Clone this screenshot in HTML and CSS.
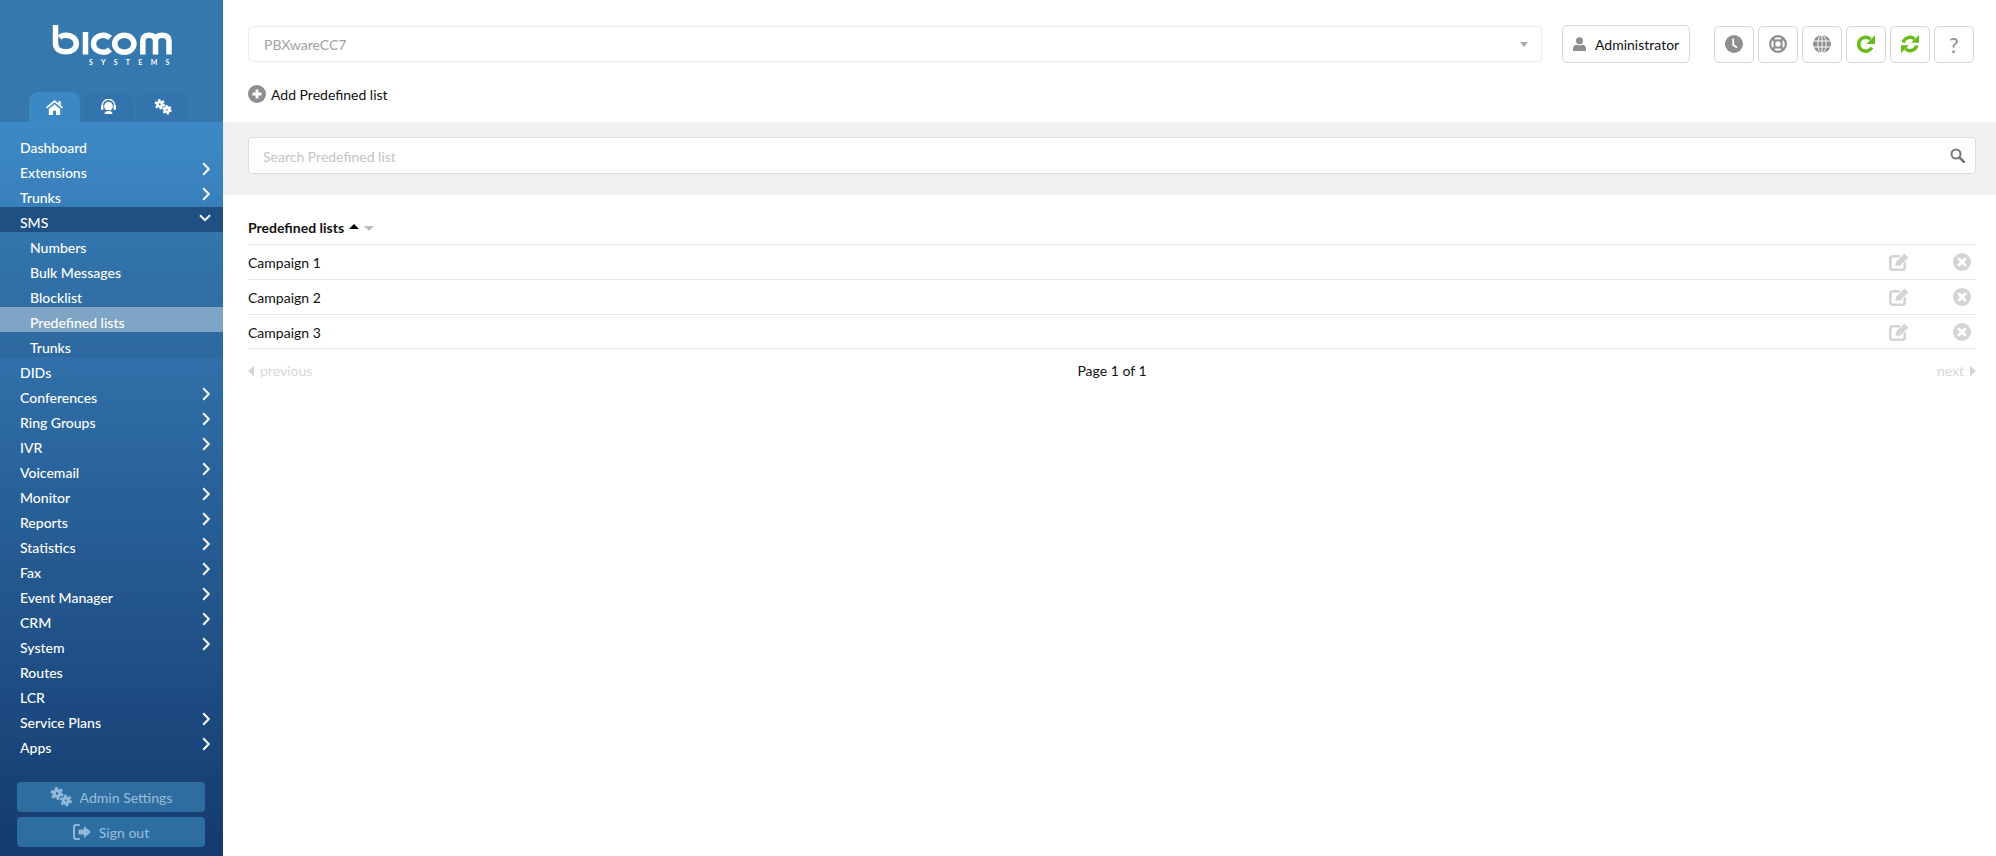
FILE: index.html
```html
<!DOCTYPE html>
<html lang="en">
<head>
<meta charset="utf-8">
<title>Predefined lists</title>
<link rel="stylesheet" href="styles.css">
</head>
<body>
<svg class="defs" width="0" height="0" aria-hidden="true">
  <defs>
    <symbol id="chev-r" viewBox="0 0 8 14"><path d="M1.2 1.2 6.8 7 1.2 12.8" fill="none" stroke="currentColor" stroke-width="2"/></symbol>
    <symbol id="chev-d" viewBox="0 0 12 8"><path d="M1 1.2 6 6.2 11 1.2" fill="none" stroke="currentColor" stroke-width="2"/></symbol>
    <symbol id="cogs" viewBox="0 0 22 20">
      <g fill="none" stroke="currentColor">
        <circle cx="7" cy="6.5" r="3" stroke-width="3.4"/>
        <circle cx="7" cy="6.5" r="5.3" stroke-width="2.4" stroke-dasharray="2.8 2.75"/>
        <circle cx="16" cy="13.5" r="2.7" stroke-width="3.2"/>
        <circle cx="16" cy="13.5" r="4.8" stroke-width="2.4" stroke-dasharray="2.6 2.43"/>
      </g>
    </symbol>
    <symbol id="edit" viewBox="0 0 20 18">
      <path d="M3 3.300H11M15.700 9V14.500A2.200 2.200 0 0 1 13.500 16.700H3.500A2.200 2.200 0 0 1 1.300 14.500V5.500A2.200 2.200 0 0 1 3.500 3.300" fill="none" stroke="currentColor" stroke-width="2.600"/>
      <path d="M5.800 13 6.600 8.700 15.300 0 20 4.400 11 13.200z" fill="currentColor" stroke="#fff" stroke-width="1"/>
    </symbol>
    <symbol id="close" viewBox="0 0 18 18">
      <circle cx="9" cy="9" r="9" fill="currentColor"/>
      <path d="M6 6 12 12M12 6 6 12" stroke="#fff" stroke-width="3" stroke-linecap="round"/>
    </symbol>
  </defs>
</svg>

<div class="app">
  <aside class="sidebar">
    <div class="brand">
      <svg class="logo" viewBox="0 0 120 32" width="120" height="32" role="img" aria-label="Bicom">
        <g fill="none" stroke="#fff" stroke-width="5.500">
          <path d="M3.500 1C3.500 3 3.500 5 3.500 19.500C3.500 25 8 27.800 14 27.800C20 27.800 24.300 24.500 24.300 19.800C24.300 15 20 11.200 14 11.200C11 11.200 9 12 7.500 13.500"/>
          <path d="M33.500 8V30.500"/>
          <path d="M58 14C56 12 54 11.200 51.500 11.200C46 11.200 41.500 14.800 41.500 19.800C41.500 24.800 46 28.200 51.500 28.200C54 28.200 56 27.500 58 25.500"/>
          <ellipse cx="72.300" cy="19.700" rx="9.600" ry="8.500"/>
          <path d="M90.800 30.500V17C90.800 13.500 92.500 11.200 97 11.200C101.500 11.200 103.500 13.500 103.500 17V30.500M103.500 17C103.500 13.500 105.500 11.200 110 11.200C115 11.200 117 13.500 117 17V30.500"/>
        </g>
      </svg>
      <div class="logo-sub">SYSTEMS</div>
    </div>
    <div class="tabs">
      <div class="tab tab-active">
        <svg width="17" height="15" viewBox="0 0 17 15"><path d="M8.500 0 12.500 3.400V1h2.200v4.300L17 7.300 16 8.500 8.500 2.200 1 8.500 0 7.300zM2.800 9 8.500 4.200 14.200 9v6H10v-4.200H7V15H2.800z" fill="#fff"/></svg>
      </div>
      <div class="tab">
        <svg width="15" height="16" viewBox="0 0 15 16"><path d="M1.300 8V6.500a6.200 6.200 0 0 1 12.400 0V8" fill="none" stroke="#fff" stroke-width="1.300"/><ellipse cx="7.500" cy="7.200" rx="4.300" ry="4.500" fill="#fff"/><rect x="0" y="6" width="2.400" height="5" rx="1" fill="#fff"/><rect x="12.600" y="6" width="2.400" height="5" rx="1" fill="#fff"/><path d="M3.500 15c0-2 1.500-3 4-3s4 1 4 3z" fill="#fff"/><path d="M4.500 11.500h4" stroke="#3474ad" stroke-width="1"/></svg>
      </div>
      <div class="tab">
        <svg class="cog-icon" width="18" height="16"><use href="#cogs"/></svg>
      </div>
    </div>
    <div class="nav-wrap">
      <nav class="nav">
        <a class="item">Dashboard</a>
        <a class="item">Extensions<svg class="chev"><use href="#chev-r"/></svg></a>
        <a class="item">Trunks<svg class="chev"><use href="#chev-r"/></svg></a>
        <a class="item item-open">SMS<svg class="chev-down"><use href="#chev-d"/></svg></a>
        <div class="sub">
          <a class="item sub-item">Numbers</a>
          <a class="item sub-item">Bulk Messages</a>
          <a class="item sub-item">Blocklist</a>
          <a class="item sub-item sub-active">Predefined lists</a>
          <a class="item sub-item">Trunks</a>
        </div>
        <a class="item">DIDs</a>
        <a class="item">Conferences<svg class="chev"><use href="#chev-r"/></svg></a>
        <a class="item">Ring Groups<svg class="chev"><use href="#chev-r"/></svg></a>
        <a class="item">IVR<svg class="chev"><use href="#chev-r"/></svg></a>
        <a class="item">Voicemail<svg class="chev"><use href="#chev-r"/></svg></a>
        <a class="item">Monitor<svg class="chev"><use href="#chev-r"/></svg></a>
        <a class="item">Reports<svg class="chev"><use href="#chev-r"/></svg></a>
        <a class="item">Statistics<svg class="chev"><use href="#chev-r"/></svg></a>
        <a class="item">Fax<svg class="chev"><use href="#chev-r"/></svg></a>
        <a class="item">Event Manager<svg class="chev"><use href="#chev-r"/></svg></a>
        <a class="item">CRM<svg class="chev"><use href="#chev-r"/></svg></a>
        <a class="item">System<svg class="chev"><use href="#chev-r"/></svg></a>
        <a class="item">Routes</a>
        <a class="item">LCR</a>
        <a class="item">Service Plans<svg class="chev"><use href="#chev-r"/></svg></a>
        <a class="item">Apps<svg class="chev"><use href="#chev-r"/></svg></a>
      </nav>
      <div class="side-buttons">
        <a class="side-btn"><svg class="side-cogs"><use href="#cogs"/></svg>Admin Settings</a>
        <a class="side-btn"><svg width="18" height="16" viewBox="0 0 18 16"><path d="M6 1H3a2 2 0 0 0-2 2v10a2 2 0 0 0 2 2h3" fill="none" stroke="currentColor" stroke-width="2" stroke-linecap="round"/><path d="M5.500 5.500h5.500V2L18 8 11 14v-3.500H5.500z" fill="currentColor"/></svg>Sign out</a>
      </div>
    </div>
  </aside>

  <main class="main">
    <div class="top">
      <div class="toolbar">
        <div class="select"><span>PBXwareCC7</span><i class="select-caret"></i></div>
        <button class="user-btn" type="button">
          <svg width="13" height="14" viewBox="0 0 13 14"><circle cx="6.500" cy="3.700" r="3.500" fill="#8e8e8e"/><path d="M0 14V11.500C0 9 2 8 4 7.800 5.500 8.500 7.500 8.500 9 7.800 11 8 13 9 13 11.500V14z" fill="#8e8e8e"/></svg>
          Administrator
        </button>
        <div class="tools">
          <button class="tool" type="button"><svg width="18" height="18" viewBox="0 0 18 18"><circle cx="9" cy="9" r="9" fill="#8e8e8e"/><path d="M8.200 3.500V10L12 12.500" fill="none" stroke="#fff" stroke-width="1.700"/></svg></button>
          <button class="tool" type="button"><svg width="18" height="18" viewBox="0 0 18 18"><g fill="none" stroke="#8e8e8e"><circle cx="9" cy="9" r="7.900" stroke-width="2.200"/><circle cx="9" cy="9" r="3.700" stroke-width="2"/><path d="M3.300 3.300 6 6M14.700 3.300 12 6M3.300 14.700 6 12M14.700 14.700 12 12" stroke-width="2.800"/></g></svg></button>
          <button class="tool" type="button"><svg width="18" height="18" viewBox="0 0 18 18"><circle cx="9" cy="9" r="9" fill="#8e8e8e"/><g fill="none" stroke="#fff" stroke-width="1"><ellipse cx="9" cy="9" rx="4.200" ry="9"/><path d="M9 0V18M0 6H18M0 12H18"/></g></svg></button>
          <button class="tool" type="button"><svg width="18" height="20" viewBox="0 0 18 20"><path d="M14.800 13.500A7 7 0 1 1 13.500 5.200" fill="none" stroke="#68bd1b" stroke-width="3.600"/><path d="M18 1V10H9.500z" fill="#68bd1b"/></svg></button>
          <button class="tool" type="button"><svg width="18" height="20" viewBox="0 0 18 20"><g fill="none" stroke="#68bd1b" stroke-width="3.400"><path d="M2.200 8.500A7 7 0 0 1 13.500 5"/><path d="M15.800 11.500A7 7 0 0 1 4.500 15"/></g><path d="M18 1V8.800H10zM0 19V11.200H8z" fill="#68bd1b"/></svg></button>
          <button class="tool tool-help" type="button">?</button>
        </div>
      </div>
      <a class="add-link"><svg width="18" height="18" viewBox="0 0 18 18"><circle cx="9" cy="9" r="9" fill="#8e8e8e"/><path d="M9 4.500V13.500M4.500 9H13.500" stroke="#fff" stroke-width="2.800"/></svg>Add Predefined list</a>
    </div>
    <div class="filter">
      <div class="search">
        <span class="search-text">Search Predefined list</span>
        <svg width="15" height="15" viewBox="0 0 15 15"><circle cx="6" cy="6" r="4.500" fill="none" stroke="#777" stroke-width="2"/><path d="M9.500 9.500 14 14" stroke="#777" stroke-width="2.500" stroke-linecap="round"/></svg>
      </div>
    </div>
    <section class="list">
      <div class="list-head">Predefined lists<i class="sort-up"></i><i class="sort-down"></i></div>
      <div class="row"><span>Campaign 1</span><div class="row-actions"><svg class="ic-edit"><use href="#edit"/></svg><svg class="ic-close"><use href="#close"/></svg></div></div>
      <div class="row"><span>Campaign 2</span><div class="row-actions"><svg class="ic-edit"><use href="#edit"/></svg><svg class="ic-close"><use href="#close"/></svg></div></div>
      <div class="row row-last"><span>Campaign 3</span><div class="row-actions"><svg class="ic-edit"><use href="#edit"/></svg><svg class="ic-close"><use href="#close"/></svg></div></div>
      <div class="pager">
        <span class="pager-side"><i class="tri-left"></i>previous</span>
        <span class="pager-mid">Page 1 of 1</span>
        <span class="pager-side pager-next">next<i class="tri-right"></i></span>
      </div>
    </section>
  </main>
</div>
</body>
</html>
```

FILE: styles.css
```css
* { box-sizing: border-box; }
html, body { margin: 0; height: 100%; }
body { font-family: Lato, "Open Sans", sans-serif; font-size: 14px; color: #111; background: #fff; overflow: hidden; }
.defs { position: absolute; }
.app { display: flex; height: 856px; }

.sidebar { width: 223px; flex: none; display: flex; flex-direction: column; background: #3578ae; }
.brand { height: 92px; padding: 24px 0 0 52px; }
.logo { display: block; }
.logo-sub { margin-top: 2px; padding-left: 37px; font-size: 7px; font-weight: 700; line-height: 9px; letter-spacing: 8.300px; color: #fff; white-space: nowrap; }
.tabs { display: flex; gap: 3px; height: 30px; padding-left: 29px; }
.tab { width: 51px; height: 30px; border-radius: 9px 9px 0 0; background: #3474ad; display: flex; align-items: center; justify-content: center; }
.tab-active { background: #3c88c4; }
.tab svg { display: block; }
.cog-icon { color: #fff; }

.nav-wrap { flex: 1; display: flex; flex-direction: column; justify-content: space-between; padding-top: 10px; background: linear-gradient(#3d89c5, #143a6e); }
.item { position: relative; display: block; height: 25px; padding: 7px 0 0 20px; line-height: 18px; font-weight: 500; color: #fff; }
.chev { position: absolute; right: 13px; top: 5px; width: 8px; height: 14px; color: #fff; }
.chev-down { position: absolute; right: 12px; top: 7px; width: 12px; height: 8px; color: #fff; }
.item-open { background: #1f4f83; }
.sub { background: rgba(0, 0, 0, .06); }
.sub-item { padding-left: 30px; }
.sub-active { background: rgba(255, 255, 255, .38); }

.side-buttons { display: flex; flex-direction: column; gap: 5px; padding: 0 18px 9px 17px; }
.side-btn { height: 30px; border-radius: 4px; background: #2e6d9f; color: #93b9d9; font-weight: 500; display: flex; align-items: center; justify-content: center; gap: 8px; }
.side-cogs { width: 22px; height: 20px; }

.main { flex: 1; min-width: 0; }
.top { height: 122px; padding: 25px 20px 0 25px; }
.toolbar { display: flex; align-items: center; height: 38px; margin-right: 2px; }
.select { flex: 1; height: 36px; display: flex; align-items: center; justify-content: space-between; padding: 1px 13px 0 15px; border: 1px solid #ececec; border-radius: 4px; color: #a2a2a2; }
.select-caret { width: 0; height: 0; border: 4px solid transparent; border-top: 5px solid #aaa; border-bottom: 0; }
.user-btn { width: 128px; height: 38px; margin-left: 20px; padding: 0 0 0 10px; display: flex; align-items: center; gap: 9px; border: 1px solid #d6d6d6; border-radius: 5px; background: #fff; font: inherit; color: #111; }
.tools { display: flex; gap: 4px; margin-left: 24px; }
.tool { width: 40px; height: 37px; padding: 0; display: flex; align-items: center; justify-content: center; border: 1px solid #d6d6d6; border-radius: 5px; background: #fff; font: inherit; }
.tool-help { font-size: 21px; font-weight: 400; color: #8e8e8e; }
.add-link { display: flex; align-items: center; gap: 5px; height: 18px; margin-top: 22px; color: #111; }

.filter { height: 73px; padding: 15px 20px 0 25px; background: #f0f0f0; }
.search { height: 37px; display: flex; align-items: center; justify-content: space-between; padding: 0 10px 0 14px; border: 1px solid #dcdcdc; border-radius: 4px; background: #fff; color: #c4c4c4; }
.search-text { padding-top: 2px; }

.list { padding: 0 20px 0 25px; }
.list-head { height: 50px; padding-top: 24px; line-height: 17px; border-bottom: 1px solid #e6e6e6; font-weight: 700; display: flex; align-items: flex-start; }
.sort-up { width: 0; height: 0; margin: 5px 0 0 5px; border: 5.500px solid transparent; border-bottom: 5.500px solid #000; border-top: 0; }
.sort-down { width: 0; height: 0; margin: 7px 0 0 5px; border: 5.500px solid transparent; border-top: 5.500px solid #bbb; border-bottom: 0; }
.row { height: 35px; display: flex; align-items: center; justify-content: space-between; border-bottom: 1px solid #e6e6e6; }
.row-last { height: 34px; padding-top: 1px; }
.row-actions { display: flex; align-items: center; gap: 44px; padding-right: 5px; }
.ic-edit { width: 20px; height: 18px; color: #d4d4d4; }
.ic-close { width: 18px; height: 18px; color: #d4d4d4; }
.pager { height: 43px; display: flex; align-items: center; justify-content: space-between; }
.pager-side { display: flex; align-items: center; gap: 6px; width: 120px; color: #d8d8d8; }
.pager-next { justify-content: flex-end; }
.pager-mid { color: #111; }
.tri-left { width: 0; height: 0; border: 5.500px solid transparent; border-right: 6px solid #d4d4d4; border-left: 0; }
.tri-right { width: 0; height: 0; border: 5.500px solid transparent; border-left: 6px solid #d4d4d4; border-right: 0; }
```
